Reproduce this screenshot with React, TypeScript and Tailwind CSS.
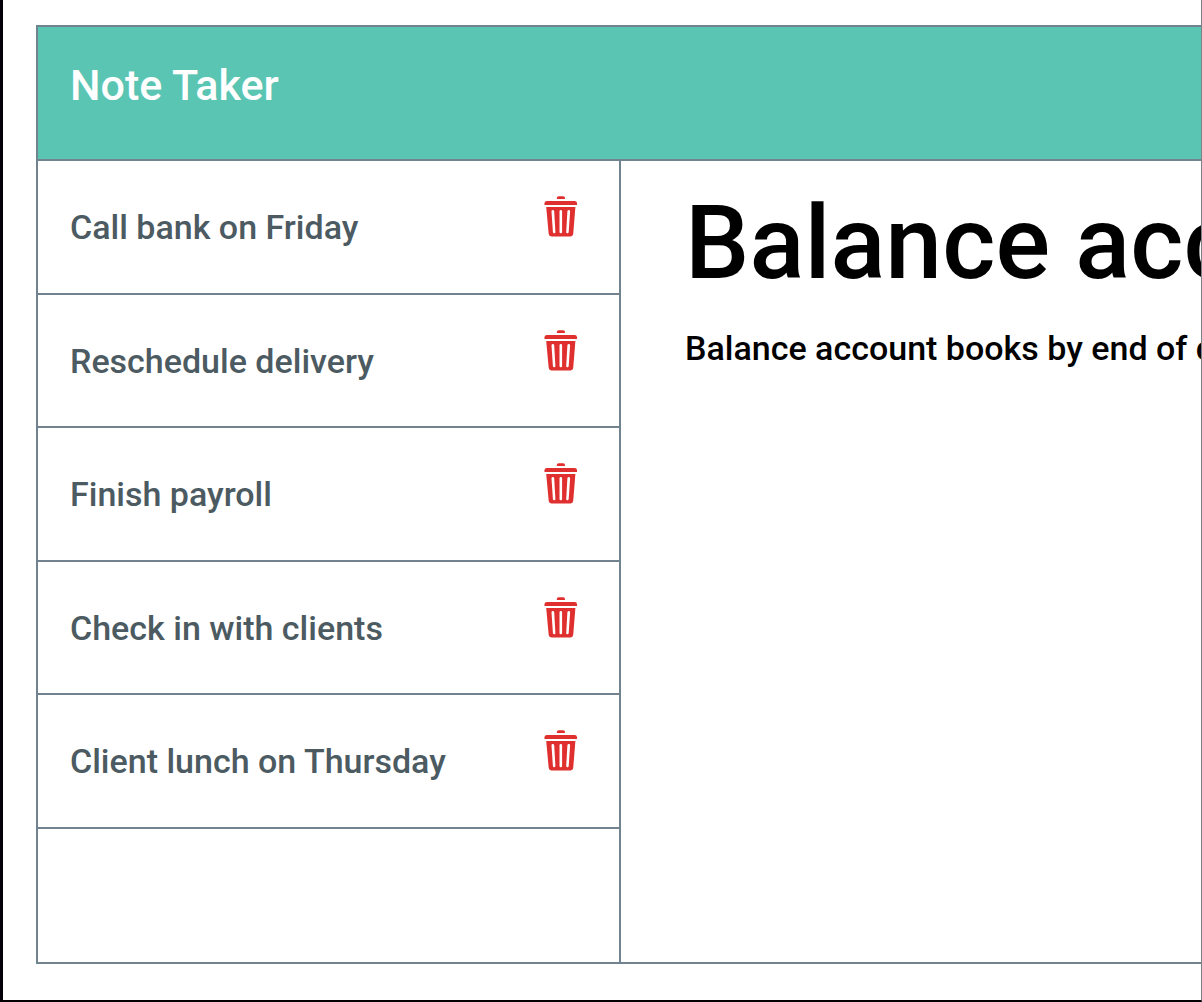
import { useState } from "react";

const initialNotes = [
  "Call bank on Friday",
  "Reschedule delivery",
  "Finish payroll",
  "Check in with clients",
  "Client lunch on Thursday",
];

function TrashIcon() {
  return (
    <svg viewBox="0 0 34 42" className="h-[42px] w-[34px]" fill="currentColor" aria-hidden="true">
      <path d="M12.8 3V2Q12.8 .2 14.6 .2H19.2Q21 .2 21 2V3Z" />
      <path d="M.5 9V7.3Q.5 4.9 3 4.9H30.6Q33 4.9 33 7.3V9Z" />
      <path
        fillRule="evenodd"
        d="M2.2 11H31.4L29.2 38Q28.9 40.4 26.6 40.4H7.4Q5 40.4 4.7 38ZM8.6 14Q7.4 14.1 7.5 15.4L8.9 36.1Q9.1 37.4 10.3 37.3Q11.5 37.2 11.4 35.9L10.2 15.2Q10 13.9 8.6 14ZM16.8 14Q15.5 14 15.5 15.3V36Q15.5 37.3 16.8 37.3Q18.1 37.3 18.1 36V15.3Q18.1 14 16.8 14ZM25 14Q23.6 13.9 23.4 15.2L22.2 35.9Q22.1 37.2 23.3 37.3Q24.5 37.4 24.7 36.1L26.1 15.4Q26.2 14.1 25 14Z"
      />
    </svg>
  );
}

export default function App() {
  const [notes, setNotes] = useState(initialNotes);

  return (
    <div className="flex min-h-screen flex-col overflow-hidden border-r border-b-2 border-l-3 border-r-[#808088] border-b-black border-l-[#050008] bg-white pt-[25px] pb-9 pl-[33px] font-['Roboto',sans-serif] font-medium">
      <div className="flex flex-1 flex-col border-2 border-r-0 border-[#71838f]">
        <header className="h-[134px] border-b-2 border-[#71838f] bg-[#5bc5b4] px-8 pt-8">
          <h1 className="text-[43px] leading-[52px] text-white">Note Taker</h1>
        </header>
        <div className="flex flex-1">
          <ul className="grid w-[583px] shrink-0 auto-rows-fr border-r-2 border-[#71838f]">
            {notes.map((note) => (
              <li
                key={note}
                className="flex min-h-[132px] items-start justify-between border-b-2 border-[#71838f] pt-[35px] pr-[41px] pl-8"
              >
                <span className="pt-[11px] text-[34px] leading-10 text-[#4c5a62]">{note}</span>
                <button
                  type="button"
                  aria-label={`Delete ${note}`}
                  className="cursor-pointer text-[#df302f]"
                  onClick={() => setNotes(notes.filter((item) => item !== note))}
                >
                  <TrashIcon />
                </button>
              </li>
            ))}
            <li className="min-h-[132px]" />
          </ul>
          <main className="min-w-0 flex-1 overflow-hidden pt-[22px] pl-16 whitespace-nowrap text-black">
            <h2 className="text-[102px] leading-[120px]">Balance accounts</h2>
            <p className="mt-[25px] text-[34px] leading-10">Balance account books by end of day</p>
          </main>
        </div>
      </div>
    </div>
  );
}
